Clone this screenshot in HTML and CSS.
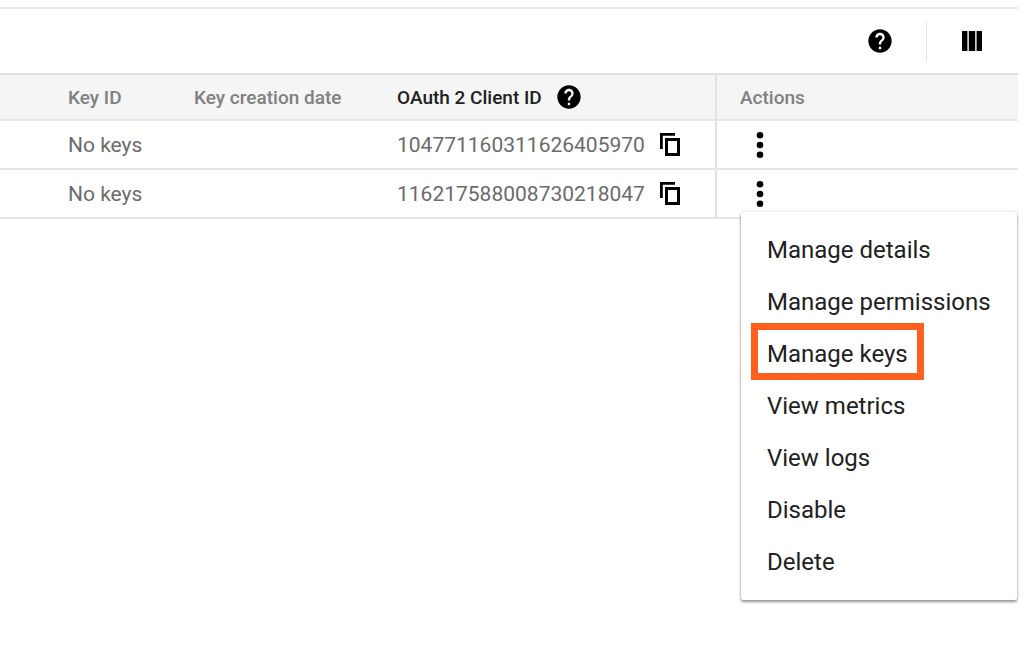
FILE: index.html
```
<!DOCTYPE html>
<html lang="en">
<head>
  <meta charset="UTF-8" />
  <meta name="viewport" content="width=device-width, initial-scale=1.0"/>
  <title>Service accounts</title>
  <link rel="stylesheet" href="styles.css">
</head>
<body>
  <svg class="sprite" aria-hidden="true">
    <symbol id="icon-help" viewBox="0 0 24 24">
      <path d="M12 2C6.48 2 2 6.48 2 12s4.48 10 10 10 10-4.48 10-10S17.52 2 12 2zm1 17h-2v-2h2v2zm2.07-7.75l-.9.92C13.45 12.9 13 13.5 13 15h-2v-.5c0-1.1.45-2.1 1.17-2.83l1.24-1.26c.37-.36.59-.86.59-1.41 0-1.1-.9-2-2-2s-2 .9-2 2H8c0-2.21 1.79-4 4-4s4 1.79 4 4c0 .88-.36 1.68-.93 2.25z"/>
    </symbol>
    <symbol id="icon-columns" viewBox="0 0 20 20">
      <path d="M0 0h5.4v20H0zM6.8 0h6.4v20H6.8zM14.6 0H20v20h-5.4z"/>
    </symbol>
    <symbol id="icon-copy" viewBox="0 0 20 23">
      <path d="M1.4 16V1.4H15" fill="none" stroke="#000" stroke-width="2.8"/>
      <path d="M6.5 6.5h12v15h-12z" fill="none" stroke="#000" stroke-width="3"/>
    </symbol>
    <symbol id="icon-more" viewBox="0 0 8 28">
      <circle cx="4" cy="4.3" r="3.3"/>
      <circle cx="4" cy="14" r="3.3"/>
      <circle cx="4" cy="23.7" r="3.3"/>
    </symbol>
  </svg>

  <main class="panel">
    <div class="toolbar">
      <button class="icon-btn" aria-label="Help"><svg class="help"><use href="#icon-help"/></svg></button>
      <span class="divider"></span>
      <button class="icon-btn" aria-label="Column display options"><svg class="columns"><use href="#icon-columns"/></svg></button>
    </div>

    <table class="accounts">
      <thead>
        <tr>
          <th class="col-key">Key ID</th>
          <th class="col-date">Key creation date</th>
          <th class="col-client">
            <div class="cell">OAuth 2 Client ID
              <button class="icon-btn" aria-label="About client IDs"><svg class="help"><use href="#icon-help"/></svg></button>
            </div>
          </th>
          <th class="col-actions">Actions</th>
        </tr>
      </thead>
      <tbody>
        <tr>
          <td class="col-key">No keys</td>
          <td></td>
          <td>
            <div class="cell">104771160311626405970
              <button class="icon-btn" aria-label="Copy client ID"><svg class="copy"><use href="#icon-copy"/></svg></button>
            </div>
          </td>
          <td class="col-actions">
            <button class="icon-btn more-btn" aria-label="Actions"><svg class="more"><use href="#icon-more"/></svg></button>
          </td>
        </tr>
        <tr>
          <td class="col-key">No keys</td>
          <td></td>
          <td>
            <div class="cell">116217588008730218047
              <button class="icon-btn" aria-label="Copy client ID"><svg class="copy"><use href="#icon-copy"/></svg></button>
            </div>
          </td>
          <td class="col-actions">
            <div class="dropdown">
              <button class="icon-btn more-btn" aria-label="Actions" aria-expanded="true"><svg class="more"><use href="#icon-more"/></svg></button>
              <div class="menu" role="menu">
                <button class="menu-item" role="menuitem">Manage details</button>
                <button class="menu-item" role="menuitem">Manage permissions</button>
                <button class="menu-item highlight" role="menuitem">Manage keys</button>
                <button class="menu-item" role="menuitem">View metrics</button>
                <button class="menu-item" role="menuitem">View logs</button>
                <button class="menu-item" role="menuitem">Disable</button>
                <button class="menu-item" role="menuitem">Delete</button>
              </div>
            </div>
          </td>
        </tr>
      </tbody>
    </table>
  </main>
</body>
</html>
```
FILE: styles.css
```
*,
*::after {
  box-sizing: border-box;
}

body {
  margin: 0;
  min-height: 100vh;
  background: #fff;
  color: #6b6b6b;
  font-family: Roboto, sans-serif;
  font-size: 21px;
}

.sprite {
  display: none;
}

.panel {
  padding: 7px 6px 0 0;
}

button {
  border: 0;
  padding: 0;
  background: none;
  font-family: inherit;
  cursor: pointer;
}

.icon-btn {
  display: flex;
  color: #000;
}

/* toolbar */
.toolbar {
  display: flex;
  align-items: center;
  justify-content: flex-end;
  height: 66px;
  padding-right: 36px;
  border-top: 2px solid #e6e6e6;
}

.divider {
  width: 1px;
  height: 42px;
  margin: 0 35px 0 32px;
  background: #e4e4e4;
}

.help {
  width: 28px;
  height: 28px;
}

.columns {
  width: 20px;
  height: 20px;
}

.copy {
  width: 20px;
  height: 23px;
}

.more {
  width: 8px;
  height: 28px;
}

/* table */
.accounts {
  width: 100%;
  table-layout: fixed;
  border-collapse: separate;
  border-spacing: 0;
}

th,
td {
  height: 49px;
  padding: 0 0 0 24px;
  border-bottom: 2px solid #e6e6e6;
  text-align: left;
  white-space: nowrap;
}

th {
  height: 48px;
  border-top: 2px solid #e2e2e2;
  background: #f5f5f5;
  color: #808080;
  font-size: 19px;
  font-weight: 500;
}

.col-key {
  width: 170px;
  padding-left: 68px;
}

.col-date {
  width: 203px;
}

.col-client {
  width: 342px;
  color: #212121;
}

.col-actions {
  padding-left: 23px;
  border-left: 2px solid #e2e2e2;
}

.cell {
  display: flex;
  align-items: center;
  gap: 15px;
}

th .cell {
  gap: 13px;
}

.more-btn {
  margin-left: 16px;
}

/* actions menu */
.dropdown {
  position: relative;
}

.menu {
  position: absolute;
  top: 32px;
  left: 1px;
  right: 1px;
  z-index: 1;
  padding: 12px 0;
  background: #fff;
  border-radius: 2px;
  box-shadow: 0 2px 3px rgba(0, 0, 0, 0.4), 0 0 3px rgba(0, 0, 0, 0.15);
}

.menu-item {
  display: block;
  position: relative;
  width: 100%;
  height: 52px;
  padding-left: 26px;
  color: #212121;
  font-size: 24px;
  text-align: left;
}

.highlight::after {
  content: "";
  position: absolute;
  top: -5px;
  left: 10px;
  width: 173px;
  height: 57px;
  border: 7px solid #ff5f1f;
}
```
